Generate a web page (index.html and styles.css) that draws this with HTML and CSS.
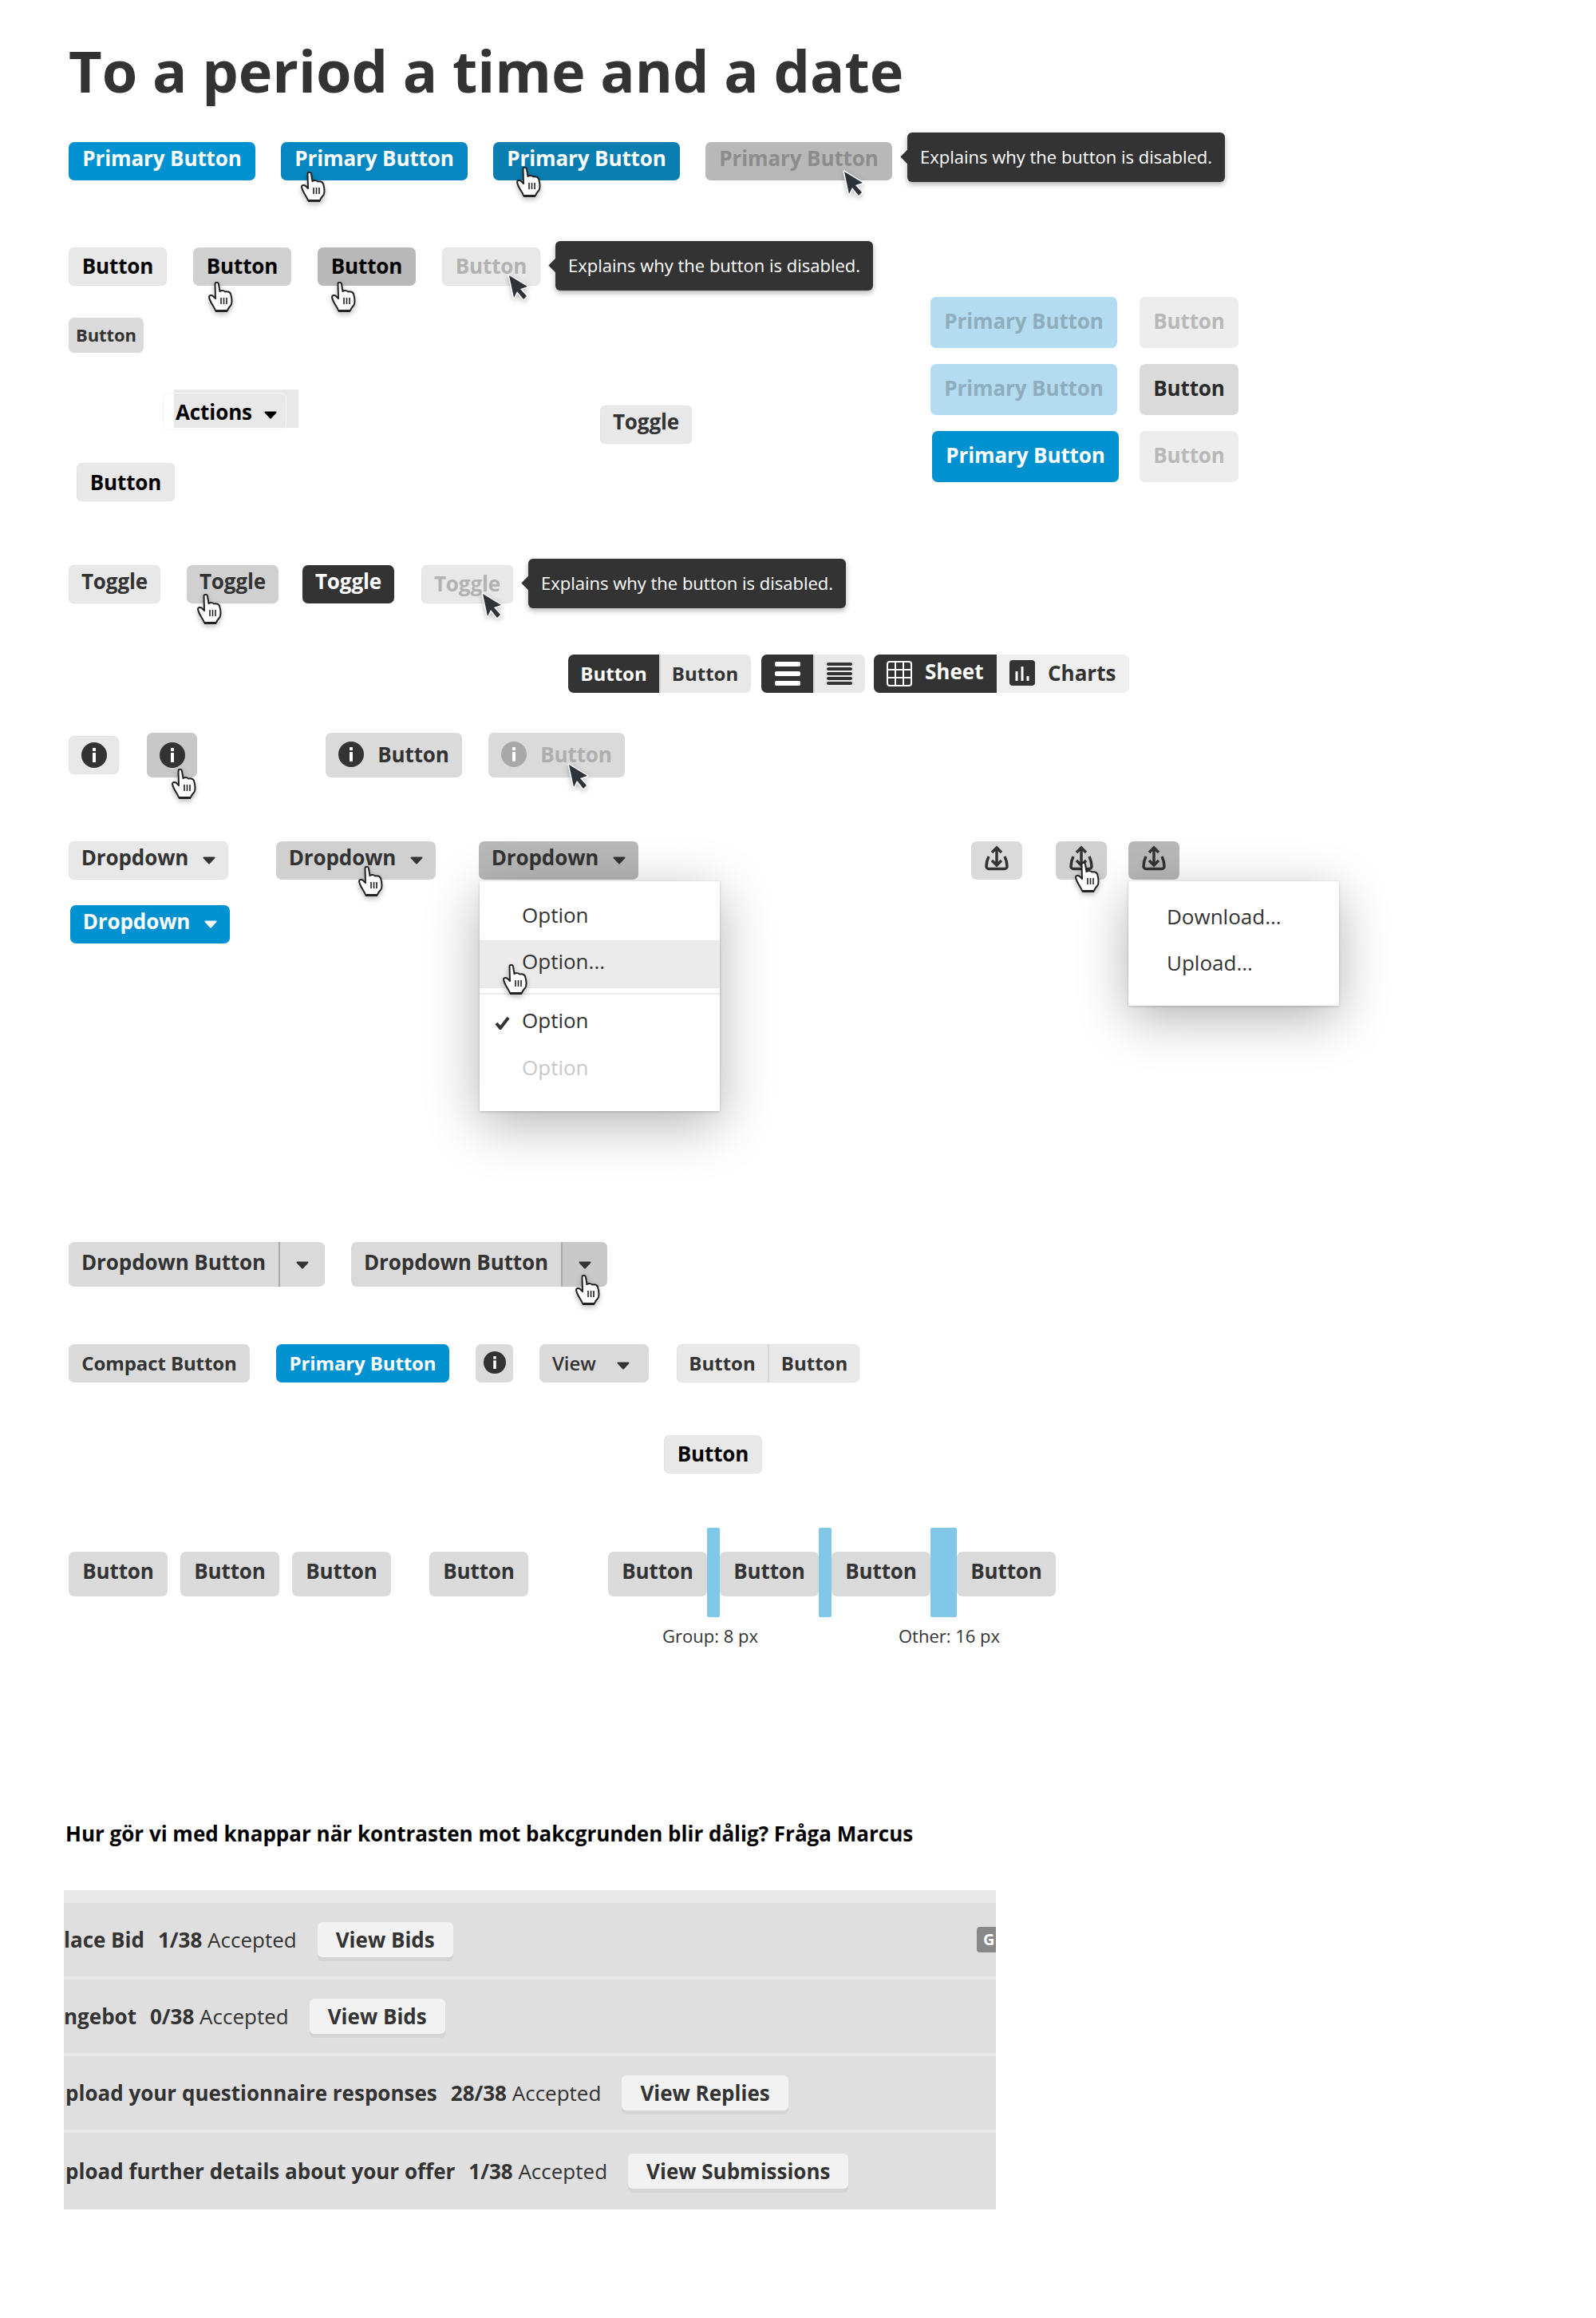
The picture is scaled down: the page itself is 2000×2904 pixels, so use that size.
FILE: index.html
```html
<!DOCTYPE html>
<html lang="en">
<head>
  <meta charset="UTF-8">
  <title>Buttons</title>
  <link rel="stylesheet" href="styles.css">
</head>
<body>
  <svg class="defs">
    <symbol id="hand" viewBox="0 0 31 38">
      <path d="M8.5 3C8.5 0 12.5 0 13 3L14.5 12C17 10.5 20 11 21 12.5C24 12 27 13 28 15C29.5 20 30 24 29 28C28 31 25 32 24 36L9 36C8 32 2 26 1 19C1 17 4 16 6 18L9 21Z" fill="#fff" stroke="#222" stroke-width="2" stroke-linejoin="round"/>
      <path d="M9 36.5H24" stroke="#222" stroke-width="3"/>
      <path d="M16 20V28M19.5 20V28M23 20V28" stroke="#222" stroke-width="1.6"/>
    </symbol>
    <symbol id="arrow" viewBox="0 0 30 36">
      <path d="M2 2L25 16L16 19L24 28L20 32L12 22L8 30Z" fill="#2d3338" stroke="#fff" stroke-width="3" stroke-linejoin="round" paint-order="stroke"/>
    </symbol>
    <symbol id="caret" viewBox="0 0 16 10">
      <path d="M1.5 1.5H14.5L8 8.5Z" fill="currentColor" stroke="currentColor" stroke-width="2" stroke-linejoin="round"/>
    </symbol>
    <symbol id="info" viewBox="0 0 32 32">
      <circle cx="16" cy="16" r="16" fill="currentColor"/>
      <rect x="14" y="7" width="4" height="4" fill="#fff"/>
      <rect x="14" y="13" width="4" height="12" fill="#fff"/>
    </symbol>
    <symbol id="upload" viewBox="0 0 32 32">
      <path d="M6 14C4 18 3 23 3 26.5A3 3 0 0 0 6 29.5H26A3 3 0 0 0 29 26.5C29 23 28 18 26 14" fill="none" stroke="currentColor" stroke-width="3.5"/>
      <path d="M16 3V25M10 9L16 3L22 9M10 19L16 25L22 19" fill="none" stroke="currentColor" stroke-width="3.5"/>
    </symbol>
  </svg>

  <main class="sheet">
    <h1>To a period a time and a date</h1>

    <div class="row row-first">
      <button class="btn lift primary">Primary Button</button>
      <button class="btn lift primary-hover">Primary Button<svg class="hand at-p2"><use href="#hand"/></svg></button>
      <button class="btn lift primary-active">Primary Button<svg class="hand at-p3"><use href="#hand"/></svg></button>
      <button class="btn lift primary-off">Primary Button<svg class="arrow at-p4"><use href="#arrow"/></svg></button>
      <div class="tip">Explains why the button is disabled.</div>
    </div>

    <div class="row row-second">
      <button class="btn ink">Button</button>
      <button class="btn ink hover">Button<svg class="hand at-b2"><use href="#hand"/></svg></button>
      <button class="btn ink active">Button<svg class="hand at-b3"><use href="#hand"/></svg></button>
      <button class="btn off">Button<svg class="arrow at-b4"><use href="#arrow"/></svg></button>
      <div class="tip">Explains why the button is disabled.</div>
    </div>

    <div class="mid">
      <div class="mid-left">
        <button class="btn small">Button</button>
        <button class="btn ink actions">Actions<svg class="caret"><use href="#caret"/></svg></button>
        <button class="btn ink lone">Button</button>
      </div>
      <div class="mid-toggle">
        <button class="btn lift">Toggle</button>
      </div>
      <div class="states">
        <button class="btn tall faint">Primary Button</button>
        <button class="btn tall off-light">Button</button>
        <button class="btn tall faint">Primary Button</button>
        <button class="btn tall mid-grey">Button</button>
        <button class="btn tall primary nudge">Primary Button</button>
        <button class="btn tall off-light">Button</button>
      </div>
    </div>

    <div class="row row-toggles">
      <button class="btn lift">Toggle</button>
      <button class="btn lift hover">Toggle<svg class="hand at-t2"><use href="#hand"/></svg></button>
      <button class="btn lift dark">Toggle</button>
      <button class="btn off">Toggle<svg class="arrow at-t4"><use href="#arrow"/></svg></button>
      <div class="tip">Explains why the button is disabled.</div>
    </div>

    <div class="row row-segments">
      <div class="seg">
        <span class="seg-item seg-text dark">Button</span><span class="seg-item seg-text seg-light">Button</span>
      </div>
      <div class="seg seg-views">
        <span class="seg-item seg-icon dark">
          <span class="bars bars-three"><i></i><i></i><i></i></span>
        </span>
        <span class="seg-item seg-icon seg-light">
          <span class="bars bars-five"><i></i><i></i><i></i><i></i><i></i></span>
        </span>
      </div>
      <div class="seg">
        <span class="seg-item seg-wide dark sheet-tab">
          <svg class="tab-icon" viewBox="0 0 32 32"><rect x="1" y="1" width="30" height="30" rx="3" fill="#333" stroke="#fff" stroke-width="2"/><path d="M11 1V31M21 1V31M1 11H31M1 21H31" stroke="#fff" stroke-width="2"/></svg>
          Sheet
        </span>
        <span class="seg-item seg-wide charts-tab">
          <svg class="tab-icon" viewBox="0 0 32 32"><rect width="32" height="32" rx="4" fill="#333"/><path d="M9 14V26M16 8V26M23 20V26" stroke="#fff" stroke-width="3"/></svg>
          Charts
        </span>
      </div>
    </div>

    <div class="row row-info">
      <button class="btn icon-btn"><svg class="info"><use href="#info"/></svg></button>
      <button class="btn tall56 icon-btn hover-strong"><svg class="info"><use href="#info"/></svg><svg class="hand at-i2"><use href="#hand"/></svg></button>
      <button class="btn tall56 soft with-icon"><svg class="info"><use href="#info"/></svg>Button</button>
      <button class="btn tall56 soft with-icon soft-off"><svg class="info"><use href="#info"/></svg>Button<svg class="arrow at-i4"><use href="#arrow"/></svg></button>
    </div>

    <div class="row row-dropdowns">
      <button class="btn lift">Dropdown<svg class="caret"><use href="#caret"/></svg></button>
      <button class="btn lift hover dd2">Dropdown<svg class="caret"><use href="#caret"/></svg><svg class="hand at-d2"><use href="#hand"/></svg></button>
      <div class="anchor dd3">
        <button class="btn lift active">Dropdown<svg class="caret"><use href="#caret"/></svg></button>
        <ul class="menu menu-options">
          <li>Option</li>
          <li class="is-hover">Option...<svg class="hand at-o2"><use href="#hand"/></svg></li>
          <li class="divider"></li>
          <li class="is-checked"><svg class="check" viewBox="0 0 19 17"><path d="M2 9L7 15L17 2" fill="none" stroke="#333" stroke-width="4"/></svg>Option</li>
          <li class="is-off">Option</li>
        </ul>
      </div>
      <button class="btn square up1 soft"><svg class="upload"><use href="#upload"/></svg></button>
      <button class="btn square up2 hover"><svg class="upload"><use href="#upload"/></svg><svg class="hand at-u2"><use href="#hand"/></svg></button>
      <div class="anchor up3">
        <button class="btn square active"><svg class="upload"><use href="#upload"/></svg></button>
        <ul class="menu menu-transfer">
          <li>Download...</li>
          <li>Upload...</li>
        </ul>
      </div>
    </div>

    <div class="row row-primary-dd">
      <button class="btn lift primary">Dropdown<svg class="caret"><use href="#caret"/></svg></button>
    </div>

    <div class="row row-splits">
      <div class="split">
        <span class="split-main">Dropdown Button</span><span class="split-side"><svg class="caret"><use href="#caret"/></svg></span>
      </div>
      <div class="split">
        <span class="split-main">Dropdown Button</span><span class="split-side split-hover"><svg class="caret"><use href="#caret"/></svg><svg class="hand at-s2"><use href="#hand"/></svg></span>
      </div>
    </div>

    <div class="row row-compact">
      <button class="btn compact soft compact-label">Compact Button</button>
      <button class="btn compact primary compact-primary">Primary Button</button>
      <button class="btn compact soft compact-icon"><svg class="info info-small"><use href="#info"/></svg></button>
      <button class="btn compact soft view">View<svg class="caret"><use href="#caret"/></svg></button>
      <div class="pair">
        <span>Button</span><span>Button</span>
      </div>
    </div>

    <div class="row row-single">
      <button class="btn ink">Button</button>
    </div>

    <div class="row row-spacing">
      <button class="btn tall56 lift soft">Button</button>
      <button class="btn tall56 lift soft">Button</button>
      <button class="btn tall56 lift soft">Button</button>
      <button class="btn tall56 lift soft apart">Button</button>
      <button class="btn tall56 lift soft far">Button</button>
      <span class="gap-bar"></span>
      <button class="btn tall56 lift soft">Button</button>
      <span class="gap-bar"></span>
      <button class="btn tall56 lift soft">Button</button>
      <span class="gap-bar gap-bar-wide"></span>
      <button class="btn tall56 lift soft">Button</button>
    </div>
    <div class="gap-labels">
      <span>Group: 8 px</span>
      <span>Other: 16 px</span>
    </div>

    <h2>Hur gör vi med knappar när kontrasten mot bakcgrunden blir dålig? Fråga Marcus</h2>

    <section class="panel">
      <div class="panel-row">
        <b>lace Bid</b>
        <span class="count"><b>1/38</b> Accepted</span>
        <a class="view-link">View Bids</a>
        <span class="badge">G</span>
      </div>
      <div class="panel-row">
        <b>ngebot</b>
        <span class="count"><b>0/38</b> Accepted</span>
        <a class="view-link">View Bids</a>
      </div>
      <div class="panel-row inset">
        <b>pload your questionnaire responses</b>
        <span class="count"><b>28/38</b> Accepted</span>
        <a class="view-link">View Replies</a>
      </div>
      <div class="panel-row inset last">
        <b>pload further details about your offer</b>
        <span class="count"><b>1/38</b> Accepted</span>
        <a class="view-link">View Submissions</a>
      </div>
    </section>
  </main>
</body>
</html>
```

FILE: styles.css
```css
body {
  margin: 0;
  background: #fff;
  color: #333;
  font-family: "Open Sans", sans-serif;
}
.defs {
  display: none;
}
.sheet {
  padding-left: 86px;
}
h1 {
  margin: 39px 0 0;
  font-size: 72px;
  font-weight: 700;
  line-height: 98px;
  color: #333;
}
h2 {
  margin: 215px 0 0 -4px;
  font-size: 26px;
  font-weight: 700;
  line-height: 36px;
  color: #000;
}
.row {
  display: flex;
  align-items: center;
}

/* buttons */
.btn {
  position: relative;
  display: inline-flex;
  align-items: center;
  justify-content: center;
  flex: none;
  box-sizing: border-box;
  height: 48px;
  padding: 0 0 2px;
  border: 0;
  border-radius: 7px;
  background: #e8e8e8;
  box-shadow: inset 0 0 0 1px #e3e3e3;
  color: #333;
  font-family: inherit;
  font-size: 26px;
  font-weight: 700;
  letter-spacing: -0.1px;
  white-space: nowrap;
}
.lift {
  padding-bottom: 8px;
}
.tall {
  height: 64px;
  box-shadow: none;
}
.tall56 {
  height: 56px;
}
.ink {
  color: #000;
}
.hover {
  background: #d0d0d0;
  box-shadow: none;
}
.active {
  background: #b8b8b8;
  box-shadow: none;
}
.off {
  color: #b2b2b2;
}
.dark {
  background: #333;
  box-shadow: none;
  color: #fff;
}
.soft {
  background: #dadada;
  box-shadow: none;
}
.primary,
.primary-hover,
.primary-active {
  box-shadow: none;
  color: #fff;
}
.primary {
  background: #0091d1;
}
.primary-hover {
  background: #0687c2;
}
.primary-active {
  background: #0a7eb0;
}
.primary-off {
  background: #b8b8b8;
  box-shadow: none;
  color: #8c8c8c;
}
.faint {
  background: #b3dcf0;
  color: #8fadbd;
}
.off-light {
  background: #ededed;
  color: #b8b8b8;
}
.mid-grey {
  background: #dadada;
  color: #2a2a2a;
}
.nudge {
  margin: 0 -2px 0 2px;
}
.caret {
  width: 16px;
  height: 10px;
  margin: 8px 0 0 18px;
  flex: none;
}

/* tooltip */
.tip {
  position: relative;
  align-self: flex-start;
  flex: none;
  box-sizing: border-box;
  height: 62px;
  margin: -12px 0 -2px 19px;
  padding: 0 16px;
  border-radius: 6px;
  background: #333;
  box-shadow: 0 3px 7px rgba(0, 0, 0, 0.3);
  color: #fff;
  font-size: 22px;
  line-height: 60px;
  white-space: nowrap;
}
.tip::before {
  content: "";
  position: absolute;
  left: -6px;
  top: 24px;
  width: 13px;
  height: 13px;
  background: #333;
  transform: rotate(45deg);
}
.row-first {
  margin-top: 41px;
  gap: 32px;
}
.row-first .btn {
  width: 234px;
}
.row-second {
  margin-top: 84px;
  gap: 33px;
}
.row-second .btn {
  width: 123px;
}
.row-first .tip {
  margin-left: -13px;
}
.row-second .tip {
  margin-left: -14px;
  margin-top: -8px;
  margin-bottom: -6px;
}

/* free standing block with the state table */
.mid {
  display: flex;
  margin-top: 14px;
  height: 256px;
}
.mid-left {
  display: flex;
  flex-direction: column;
  align-items: flex-start;
  width: 666px;
}
.small {
  width: 94px;
  height: 44px;
  margin-top: 26px;
  background: #dadada;
  box-shadow: none;
  font-size: 22px;
}
.actions {
  width: 156px;
  margin: 46px 0 0 132px;
  padding: 8px 0 0 2px;
  justify-content: flex-start;
  border-radius: 0;
  box-shadow: none;
}
.actions .caret {
  margin-left: 15px;
}
.actions::before {
  content: "";
  position: absolute;
  left: -14px;
  top: 4px;
  width: 155px;
  height: 47px;
  border: 1px solid #f4f4f4;
  border-radius: 7px;
  box-sizing: border-box;
}
.lone {
  width: 123px;
  margin: 44px 0 0 10px;
  padding-top: 2px;
}
.mid-toggle {
  width: 414px;
  padding-top: 136px;
}
.mid-toggle .btn {
  width: 115px;
}
.states {
  display: grid;
  grid-template-columns: 234px 124px;
  column-gap: 28px;
  row-gap: 20px;
  align-self: flex-start;
}
.states .btn {
  padding-bottom: 4px;
}

.row-toggles {
  margin-top: 80px;
  gap: 33px;
}
.row-toggles .btn {
  width: 115px;
}
.row-toggles .dark {
  margin-left: -3px;
}
.row-toggles .tip {
  margin-left: -14px;
  margin-top: -8px;
  margin-bottom: -6px;
}
.row-toggles .off {
  margin-left: 1px;
}

/* segmented controls */
.row-segments {
  margin: 64px 0 0 626px;
  gap: 13px;
}
.seg {
  display: flex;
  height: 48px;
  border-radius: 7px;
  overflow: hidden;
  flex: none;
  font-size: 24px;
  font-weight: 700;
}
.seg-item {
  display: flex;
  align-items: center;
  padding: 0 16px 2px;
  box-sizing: border-box;
}
.seg-text {
  justify-content: center;
  width: 114px;
}
.seg-text.seg-light {
  width: 115px;
}
.seg-light {
  background: #e8e8e8;
  box-shadow: inset 2px 0 0 #d6d6d6;
}
.seg-views {
  margin-right: -2px;
}
.seg-icon {
  width: 65px;
  padding: 0;
  justify-content: center;
}
.bars {
  display: flex;
  flex-direction: column;
  width: 32px;
}
.bars i {
  display: block;
  border-radius: 2px;
  background: currentColor;
}
.bars-three {
  gap: 6px;
}
.bars-three i {
  height: 6px;
}
.bars-five {
  gap: 2px;
}
.bars-five i {
  height: 4px;
}
.seg-wide {
  font-size: 26px;
}
.tab-icon {
  width: 32px;
  height: 32px;
  margin-right: 16px;
  flex: none;
}
.sheet-tab {
  width: 154px;
  padding-bottom: 6px;
}
.sheet-tab .tab-icon {
  margin-bottom: -6px;
}
.charts-tab {
  width: 166px;
  background: #efefef;
}

/* info buttons */
.row-info {
  margin-top: 50px;
}
.icon-btn {
  width: 63px;
  padding: 0;
}
.hover-strong {
  margin-left: 35px;
  background: #c8c8c8;
  box-shadow: none;
}
.info {
  width: 32px;
  height: 32px;
  flex: none;
  color: #333;
}
.info-small {
  width: 28px;
  height: 28px;
}
.with-icon {
  width: 171px;
  margin-left: 161px;
}
.with-icon .info {
  margin-right: 17px;
}
.soft-off {
  margin-left: 33px;
  color: #aeaeae;
}
.soft-off .info {
  color: #a8a8a8;
}

/* dropdowns */
.row-dropdowns {
  margin-top: 80px;
  align-items: flex-start;
}
.row-dropdowns .btn,
.row-primary-dd .btn {
  width: 200px;
}
.anchor {
  position: relative;
  flex: none;
}
.dd2 {
  margin-left: 60px;
}
.dd3 {
  margin-left: 54px;
}
.menu {
  position: absolute;
  top: 50px;
  margin: 0;
  padding: 13px 0 26px;
  list-style: none;
  background: #fff;
  box-shadow: 0 1px 3px rgba(0, 0, 0, 0.2), 0 16px 64px rgba(0, 0, 0, 0.3);
  font-size: 26px;
  z-index: 2;
}
.menu-options {
  left: 1px;
  width: 301px;
}
.menu-options li {
  position: relative;
  height: 58px;
  padding-left: 53px;
  line-height: 58px;
}
.menu-options .is-hover {
  height: 60px;
  margin-top: 3px;
  background: #ebebeb;
  line-height: 52px;
}
.menu-options .divider {
  height: 2px;
  margin: 6px 0 4px;
  padding: 0;
  background: #ebebeb;
}
.menu-options .is-checked {
  padding-left: 19px;
  line-height: 56px;
}
.check {
  width: 19px;
  height: 17px;
  margin-right: 15px;
  vertical-align: -2px;
}
.menu-options .is-off {
  color: #c8c8c8;
}
.menu-transfer {
  left: 0;
  width: 264px;
  padding: 15px 0 25px;
}
.menu-transfer li {
  height: 58px;
  padding-left: 48px;
  line-height: 58px;
}
.row-dropdowns .square {
  width: 64px;
}
.upload {
  width: 32px;
  height: 32px;
  margin-bottom: 4px;
  flex: none;
}
.up1 {
  margin-left: 417px;
}
.up2 {
  margin-left: 42px;
}
.up3 {
  margin-left: 27px;
}
.row-primary-dd {
  margin: 32px 0 0 2px;
}

/* split buttons */
.row-splits {
  margin-top: 374px;
  gap: 33px;
}
.split {
  display: flex;
  height: 56px;
  border-radius: 7px;
  background: #dadada;
  font-size: 26px;
  font-weight: 700;
  letter-spacing: -0.1px;
}
.split-main {
  display: flex;
  align-items: center;
  justify-content: center;
  box-sizing: border-box;
  width: 265px;
  padding-bottom: 7px;
  border-right: 2px solid #aaa;
}
.split-side {
  position: relative;
  display: flex;
  align-items: center;
  justify-content: center;
  width: 56px;
  border-radius: 0 7px 7px 0;
}
.split-side .caret {
  margin: 2px 0 0;
}
.split-hover {
  background: #c8c8c8;
}

/* compact row */
.row-compact {
  margin-top: 72px;
}
.compact {
  margin-right: 33px;
  font-size: 24px;
}
.compact-label {
  width: 227px;
}
.compact-primary {
  width: 217px;
}
.compact-icon {
  width: 47px;
}
.view {
  width: 137px;
  margin-right: 35px;
  padding-left: 16px;
  padding-right: 24px;
  justify-content: space-between;
  font-weight: 600;
}
.view .caret {
  margin-left: 0;
}
.pair {
  display: flex;
  height: 48px;
  border-radius: 7px;
  background: #e8e8e8;
  box-shadow: inset 0 0 0 1px #e3e3e3;
  font-size: 24px;
  font-weight: 700;
}
.pair span {
  display: flex;
  align-items: center;
  justify-content: center;
  box-sizing: border-box;
  width: 114px;
  padding-bottom: 2px;
}
.pair span + span {
  width: 115px;
  border-left: 2px solid #d4d4d4;
}
.row-single {
  margin: 66px 0 0 746px;
}
.row-single .btn {
  width: 123px;
}

/* spacing demo */
.row-spacing {
  margin-top: 98px;
}
.row-spacing .btn {
  width: 124px;
  margin-right: 16px;
}
.row-spacing .far {
  margin: 0 0 0 100px;
}
.row-spacing .apart {
  margin: 0 0 0 32px;
}
.row-spacing .btn:nth-child(n+6) {
  margin-right: 0;
}
.gap-bar {
  flex: none;
  width: 16px;
  height: 112px;
  margin: -30px 0 -26px;
  border-radius: 2px;
  background: #7fc8e8;
}
.gap-bar-wide {
  width: 33px;
}
.gap-labels {
  display: flex;
  margin: 34px 0 0 744px;
  color: #333;
  font-size: 22px;
  line-height: 30px;
}
.gap-labels span + span {
  margin-left: 176px;
}

/* pasted screenshot */
.panel {
  width: 1168px;
  margin: 53px 0 0 -6px;
  padding-top: 16px;
  background: #e8e8e8;
  overflow: hidden;
  font-size: 26px;
}
.panel-row {
  display: flex;
  align-items: center;
  height: 92px;
  margin-bottom: 4px;
  background: #dfdfdf;
  white-space: nowrap;
}
.panel-row.inset {
  padding-left: 2px;
}
.panel-row.last {
  height: 96px;
  margin-bottom: 0;
}
.panel-row b {
  font-weight: 700;
}
.count {
  margin-left: 17px;
}
.view-link {
  margin-left: 26px;
  padding: 0 23px;
  border-radius: 6px;
  background: #f2f2f2;
  box-shadow: 0 5px 0 #d4d4d4;
  font-weight: 700;
  line-height: 44px;
}
.badge {
  margin: 0 -16px 0 auto;
  width: 40px;
  height: 32px;
  border-radius: 4px;
  background: #888;
  color: #fff;
  font-size: 20px;
  font-weight: 700;
  line-height: 32px;
  padding-left: 8px;
  box-sizing: border-box;
}

/* cursors */
.hand,
.arrow {
  position: absolute;
  z-index: 3;
}
.hand {
  width: 31px;
  height: 38px;
  filter: drop-shadow(0 3px 3px rgba(0, 0, 0, 0.25));
}
.arrow {
  width: 30px;
  height: 36px;
  filter: drop-shadow(0 2px 3px rgba(0, 0, 0, 0.25));
}
.at-p2 { left: 25px; top: 37px; }
.at-p3 { left: 29px; top: 31px; }
.at-p4 { left: 172px; top: 35px; }
.at-b2 { left: 19px; top: 43px; }
.at-b3 { left: 17px; top: 43px; }
.at-b4 { left: 82px; top: 33px; }
.at-t2 { left: 13px; top: 36px; }
.at-t4 { left: 75px; top: 34px; }
.at-i2 { left: 31px; top: 45px; }
.at-i4 { left: 99px; top: 38px; }
.at-d2 { left: 103px; top: 31px; }
.at-o2 { left: 29px; top: 30px; }
.at-u2 { left: 24px; top: 26px; }
.at-s2 { left: 16px; top: 41px; }
```
